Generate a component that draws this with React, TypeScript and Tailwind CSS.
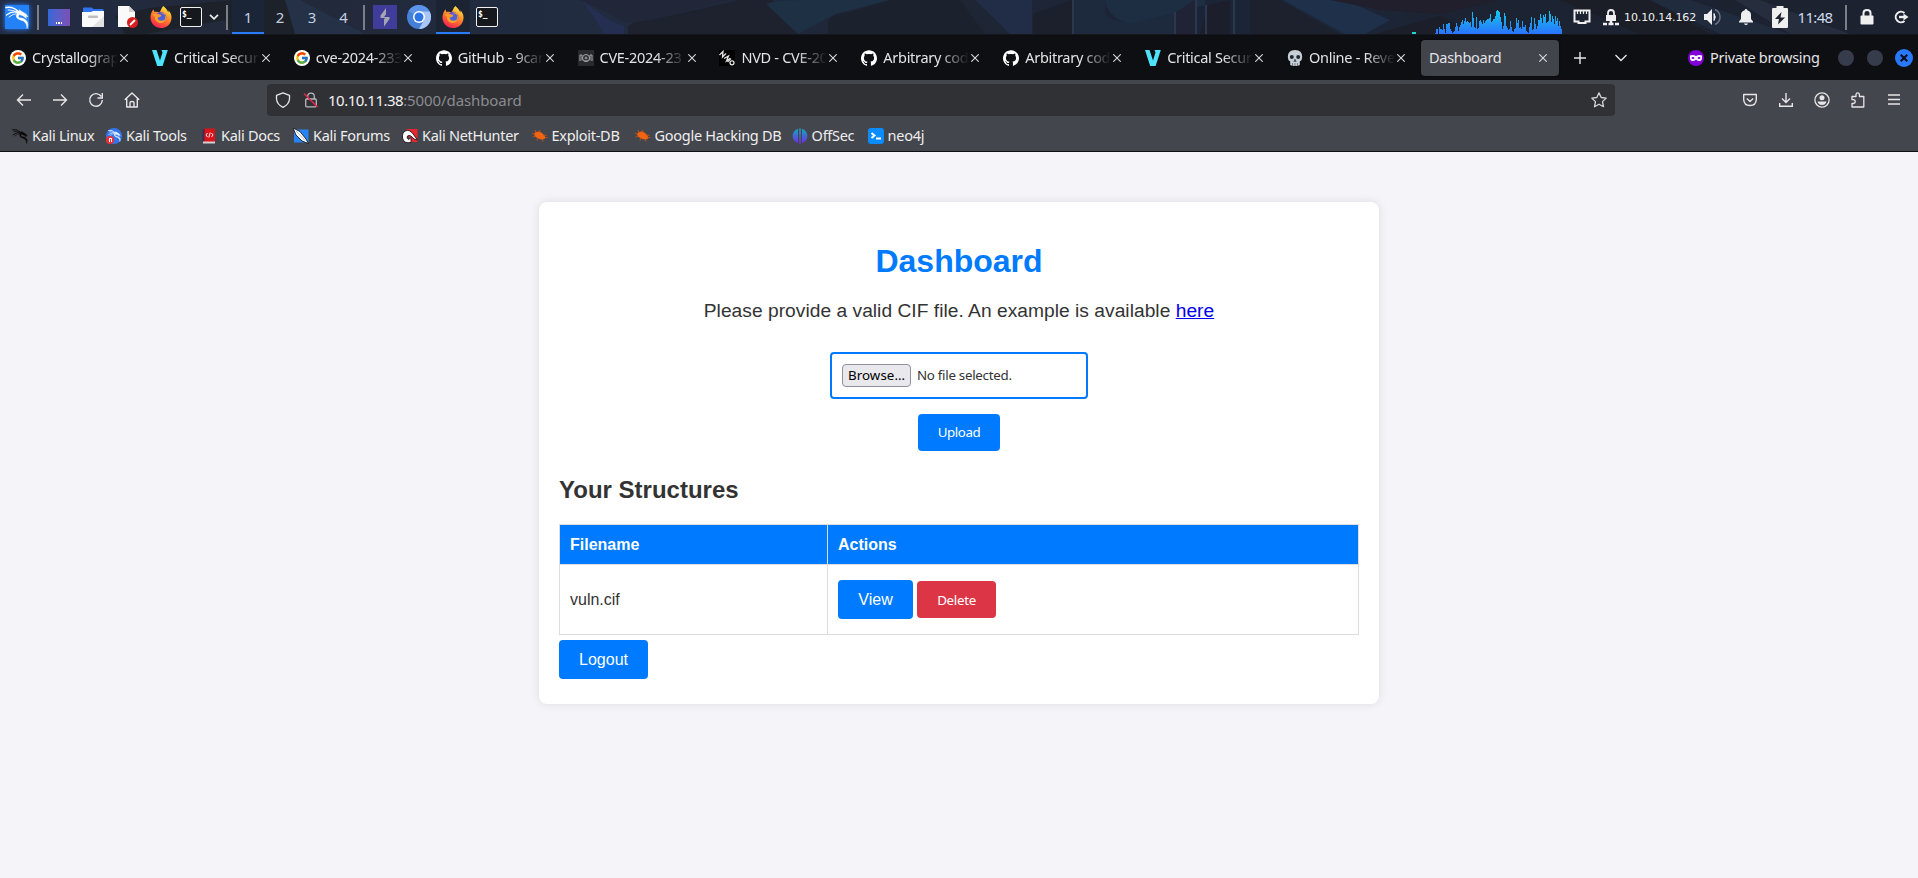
import React, { type ReactNode } from "react";
import { SiGithub } from "react-icons/si";
import { FcGoogle } from "react-icons/fc";

const BARS = [1,5,5,0,7,5,5,4,10,5,1,10,10,11,11,5,3,1,2,3,7,11,8,3,7,9,12,14,10,13,16,12,13,12,11,12,7,22,16,7,6,17,5,6,13,14,12,10,14,11,13,14,15,15,16,20,12,13,15,15,18,23,24,23,22,17,12,5,8,21,18,8,6,4,5,13,7,3,2,5,6,16,11,14,6,7,5,13,7,7,9,3,2,1,7,11,17,4,5,16,10,5,8,14,14,20,16,11,19,17,20,11,12,13,23,20,12,18,15,10,18,13,16,8,13,8,5];

function Cell({ w, className = "", children }: { w: string; className?: string; children?: ReactNode }) {
  return <div className={`flex h-[34px] shrink-0 items-center justify-center ${w} ${className}`}>{children}</div>;
}

function Sep() {
  return <div className="h-[25px] w-[2px] shrink-0 bg-[#7b7f88]" />;
}

function Dragon({ size, color }: { size: number; color: string }) {
  return (
    <svg width={size} height={size} viewBox="0 0 24 24" fill="none" stroke={color} strokeLinecap="round" aria-hidden="true">
      <path d="M1 2.500Q8 1 13 6.500" strokeWidth="1.500" />
      <path d="M3 5Q8 4.500 12 7.500" strokeWidth="1.100" />
      <path d="M1.500 10Q7 5.500 14 7.500" strokeWidth="1.300" />
      <path d="M4 12Q8 8.500 12.500 8.500" strokeWidth="0.900" />
      <path d="M12 6L14.500 6.200L14.200 4.800L17.500 7Q21 8 23 11.800L20.500 11.200L21.500 13.500Q18.500 10.500 14.500 9.500Q12.500 11 14 12.800Q20.500 13 22.500 17.500Q23.300 20 22 23.500Q22.300 18.500 18.500 16Q14 14.800 12 13Q10.200 10.500 12.800 8Z" fill={color} strokeWidth="0.500" />
    </svg>
  );
}

function Wallpaper() {
  return (
    <svg className="absolute inset-0 h-[34px] w-full" viewBox="0 0 1918 34" preserveAspectRatio="none" aria-hidden="true">
      <defs>
        <linearGradient id="wall" x1="0" x2="1">
          <stop offset="0" stopColor="#222d45" />
          <stop offset="0.12" stopColor="#222838" />
          <stop offset="0.3" stopColor="#212c41" />
          <stop offset="0.5" stopColor="#1e2535" />
          <stop offset="0.62" stopColor="#1b2437" />
          <stop offset="0.7" stopColor="#1c2739" />
          <stop offset="0.75" stopColor="#1c2332" />
          <stop offset="1" stopColor="#1c2230" />
        </linearGradient>
      </defs>
      <rect width="1918" height="34" fill="url(#wall)" />
      <path d="M115 16L150 8L235 0H285L300 34H125Z" fill="#1d2129" />
      <path d="M145 34L225 20L232 34Z" fill="#232a3c" />
      <path d="M285 0H300L365 34H295Z" fill="#243147" />
      <path d="M580 0H730L640 22Q625 25 612 15Z" fill="#212639" />
      <path d="M628 34V26Q632 22 650 20L740 0H772L798 34Z" fill="#1d222e" />
      <path d="M582 0Q608 22 624 26V34H605Z" fill="#26305a" opacity="0.7" />
      <path d="M766 4Q775 0 800 0H890L835 14L798 34Z" fill="#1d3044" />
      <path d="M828 34V22Q830 14 850 12L890 0H960L985 34Z" fill="#1c212e" />
      <path d="M975 0H1032V34H1010Z" fill="#212c47" />
      <path d="M1033 14L1072 0V34H1033Z" fill="#1c202c" />
      <path d="M1074 0H1105V14Q1115 24 1135 22L1175 12V34H1074Z" fill="#1d293c" />
      <path d="M1105 0H1205V5L1130 24Q1108 18 1105 0Z" fill="#1d2d42" />
      <path d="M1176 12V34H1195V0" fill="#202336" />
      <path d="M1208 5L1230 0V34H1200Z" fill="#1c1f2b" />
      <path d="M1250 34V0H1280L1340 34Z" fill="#1d212d" />
      <path d="M1283 0H1345L1390 20L1365 34H1345Z" fill="#1e304a" />
      <path d="M1330 0H1500L1440 14L1380 10Z" fill="#201f2b" />
      <path d="M1375 34L1440 16L1475 34Z" fill="#1c1e29" />
      <path d="M1560 0L1640 34H1710L1650 0Z" fill="#1b1e27" />
      <path d="M1650 0H1690L1790 34H1720Z" fill="#26344c" opacity="0.5" />
      <path d="M1735 0H1760L1850 34H1790Z" fill="#30374a" opacity="0.5" />
      <path d="M1073 0V34M1175 12V34M1196 0V34M1206 5V34M1234 0V34" stroke="#2a374c" strokeWidth="2" />
    </svg>
  );
}

function Firefox({ id }: { id: string }) {
  return (
    <svg width="22" height="22" viewBox="0 0 24 24" aria-hidden="true">
      <defs>
        <linearGradient id={id} x1="0.8" y1="0" x2="0.3" y2="1">
          <stop offset="0" stopColor="#fff44f" />
          <stop offset="0.35" stopColor="#ffa32c" />
          <stop offset="0.7" stopColor="#ff5a35" />
          <stop offset="1" stopColor="#ee1f58" />
        </linearGradient>
      </defs>
      <path d="M14.500 0C17 2 19 4.500 20 7C20.300 6.200 20.300 5.400 20 4.500C22.500 7 23.700 10 23.500 13C23.200 19.200 18.300 24 12 24C5.600 24 .5 19 .5 12.600C.5 9.200 1.800 5.600 4 3.500C4 4.700 4.300 5.600 5 6.500C7 6 8.500 6.200 10 7C12 5.500 12 2.500 14.500 0Z" fill={`url(#${id})`} />
      <circle cx="12" cy="12.200" r="5.800" fill="#7043d5" />
      <path d="M11 7.500Q15 6 17.500 9Q16.500 8.800 16 9.200Q18.500 12 17 15Q14.500 20 9 18Q5 16 5.300 11.500L2.500 9.500Q6 7.800 9 9.500L12 10.500Q11.500 12.500 8.800 12.800Q10 15.500 13 14.800Q16 13.500 14.500 10.500Q13.500 8.500 11 7.500Z" fill="#ffa329" />
      <circle cx="12.500" cy="12" r="4.200" fill="#4d62d9" />
      <path d="M5 9Q8 8 12.500 10Q12 12 9 12.500L6 12Z" fill="#ff9a2a" />
    </svg>
  );
}

function Terminal() {
  return (
    <div className="flex h-[20px] w-[22px] items-start rounded-[2px] border border-[#f2f2f2] bg-[#15181c] pl-[1px] pt-[2px] font-['DejaVu_Sans_Mono',monospace] text-[8px] font-bold leading-[9px] text-white">
      $_
    </div>
  );
}

function Chromium() {
  return (
    <svg width="24" height="24" viewBox="0 0 24 24" aria-hidden="true">
      <circle cx="12" cy="12" r="12" fill="#4480d8" />
      <path d="M12 12L1.600 6A12 12 0 0 1 22.400 6Z" fill="#5b94e8" />
      <path d="M12 6.500H22.700A12 12 0 0 1 12 24L17 15Z" fill="#a9c6f7" />
      <circle cx="12" cy="12" r="6" fill="#fff" />
      <circle cx="12" cy="12" r="4.500" fill="#2d76e8" />
    </svg>
  );
}

function LauncherBar() {
  return (
    <div className="flex h-[34px] items-center">
      <Cell w="w-[34px]">
        <div className="flex size-6 items-center justify-center bg-[#2382f7] shadow-[0_0_5px_#2a7fff]">
          <Dragon size={24} color="#fff" />
        </div>
      </Cell>
      <Cell w="w-[8px]"><Sep /></Cell>
      <Cell w="w-[34px]">
        <div className="flex h-[17px] w-[22px] items-end justify-center gap-px bg-linear-to-r from-[#2f68d8] to-[#7b4fb5] pb-[2px]">
          <i className="size-[1.5px] bg-white" /><i className="size-[1.5px] bg-white" /><i className="size-[1.5px] bg-white" />
        </div>
      </Cell>
      <Cell w="w-[34px]">
        <svg width="22" height="20" viewBox="0 0 22 20" aria-hidden="true">
          <path d="M1 8V1.500Q1 .5 2 .5H9.500L11.500 2H20.500Q21.500 2 21.500 3V8Z" fill="#2f74ee" />
          <path d="M0 5H9L11 4H22V19Q22 20 21 20H1Q0 20 0 19Z" fill="#fafafa" />
          <path d="M22 9V19Q22 20 21 20H10Z" fill="#e2e2e2" />
          <rect x="6" y="8.500" width="10" height="2.600" rx="1" fill="#bdbdbd" />
        </svg>
      </Cell>
      <Cell w="w-[36px]">
        <svg width="22" height="22" viewBox="0 0 22 22" aria-hidden="true">
          <path d="M1 0H12L18 6V21H1Z" fill="#fafafa" />
          <path d="M12 0L18 6H12Z" fill="#cfcfcf" />
          <circle cx="15.500" cy="16.500" r="5.500" fill="#d81e1e" />
          <path d="M13 19L18 14" stroke="#fff" strokeWidth="1.800" />
        </svg>
      </Cell>
      <Cell w="w-[30px]"><Firefox id="fx-launcher" /></Cell>
      <Cell w="w-[30px]"><Terminal /></Cell>
      <Cell w="w-[16px]">
        <svg width="10" height="6" viewBox="0 0 10 6" fill="none" stroke="#e8e8e8" strokeWidth="1.800" aria-hidden="true"><path d="M1 .8L5 4.800L9 .8" /></svg>
      </Cell>
      <Cell w="w-[10px]"><Sep /></Cell>
      <div className="flex text-[15px] text-[#c3d0e4]">
        <Cell w="w-[32px]" className="border-b-2 border-[#2a7bf6] bg-[#1b2538] pt-[2px]">1</Cell>
        <Cell w="w-[32px]">2</Cell>
        <Cell w="w-[32px]">3</Cell>
        <Cell w="w-[31px]">4</Cell>
      </div>
      <Cell w="w-[10px]"><Sep /></Cell>
      <Cell w="w-[32px]">
        <svg width="24" height="24" viewBox="0 0 24 24" aria-hidden="true">
          <rect width="24" height="24" fill="#403d9a" />
          <path d="M13 3V9.500L11 12H16.500V14L11 21.500V14.500L12 13H7.500V10.500Z" fill="#a3a5b2" />
        </svg>
      </Cell>
      <Cell w="w-[35px]"><Chromium /></Cell>
      <Cell w="w-[34px]" className="border-b-2 border-[#2a7bf6] bg-[#1c2333] pt-[2px]"><Firefox id="fx-task" /></Cell>
      <Cell w="w-[34px]"><Terminal /></Cell>
    </div>
  );
}

function SystemTray() {
  return (
    <div className="flex h-[34px] items-center text-[#efefef]">
      <svg width="152" height="34" viewBox="0 0 152 34" shapeRendering="crispEdges" aria-hidden="true">
        <defs>
          <linearGradient id="net" gradientUnits="userSpaceOnUse" x1="0" x2="0" y1="8" y2="34">
            <stop offset="0" stopColor="#10d2e8" />
            <stop offset="1" stopColor="#2a72ff" />
          </linearGradient>
        </defs>
        <path d="M1 32h4v2h-4z" fill="#22d5c8" />
        {BARS.map((h, i) => (
          <rect key={i} x={24 + i} y={34 - h} width="1" height={h} fill="url(#net)" />
        ))}
      </svg>
      <Cell w="w-[37px]">
        <svg width="18" height="16" viewBox="0 0 18 16" aria-hidden="true">
          <path d="M1.500 1.500H16.500V12.500H12.500V14H5.500V12.500H1.500Z" fill="none" stroke="currentColor" strokeWidth="2" />
          <path d="M4.500 2V5M7.500 2V5M10.500 2V5M13.500 2V5" stroke="currentColor" strokeWidth="1.200" />
        </svg>
      </Cell>
      <Cell w="w-[22px]">
        <svg width="16" height="17" viewBox="0 0 16 17" aria-hidden="true">
          <path d="M3 6H13V12H3Z" fill="currentColor" />
          <path d="M5 7V4Q5 1 8 1Q11 1 11 4V7" fill="none" stroke="currentColor" strokeWidth="1.800" />
          <path d="M0 15H4M12 15H16M5.500 15H10.500M8 12V14" stroke="currentColor" strokeWidth="2.600" />
        </svg>
      </Cell>
      <div className="w-[81px] whitespace-nowrap pl-[2px] font-['DejaVu_Sans',sans-serif] text-[11px] leading-none tracking-[-0.120px]">10.10.14.162</div>
      <Cell w="w-[19px]">
        <svg width="17" height="18" viewBox="0 0 17 18" aria-hidden="true">
          <path d="M0 6H3L8 1V17L3 12H0Z" fill="currentColor" />
          <path d="M10 5.500Q12.500 9 10 12.500Z" fill="currentColor" stroke="currentColor" />
          <path d="M11 1.500Q16 4 16 9Q16 14 11 16.500" fill="none" stroke="#6d7280" strokeWidth="1.500" />
        </svg>
      </Cell>
      <Cell w="w-[48px]">
        <svg width="14" height="16" viewBox="0 0 14 16" aria-hidden="true">
          <path d="M7 0Q8.200 0 8.300 1.300Q12 2.200 12 6V10L14 12.500V13.500H0V12.500L2 10V6Q2 2.200 5.700 1.300Q5.800 0 7 0ZM5 14.500H9Q8.500 16 7 16Q5.500 16 5 14.500Z" fill="currentColor" />
        </svg>
      </Cell>
      <Cell w="w-[20px]">
        <svg width="16" height="22" viewBox="0 0 16 22" aria-hidden="true">
          <path d="M4.500 0H11.500V2H15Q16 2 16 3V21Q16 22 15 22H1Q0 22 0 21V3Q0 2 1 2H4.500Z" fill="currentColor" />
          <path d="M9.500 6L3 13H7L6 18.500L13 11.500H8.500Z" fill="#1c2230" />
        </svg>
      </Cell>
      <Cell w="w-[51px]" className="pr-px text-[15px] tracking-[-0.700px] text-[#cdd9ea]">11:48</Cell>
      <Cell w="w-[10px]"><Sep /></Cell>
      <Cell w="w-[32px]">
        <svg width="14" height="16" viewBox="0 0 14 16" aria-hidden="true">
          <rect x="0.500" y="6.500" width="13" height="9" rx="1" fill="currentColor" />
          <path d="M3.500 7V4Q3.500 1 7 1Q10.500 1 10.500 4V7" fill="none" stroke="currentColor" strokeWidth="2" />
        </svg>
      </Cell>
      <Cell w="w-[35px]" className="pl-[2px]">
        <svg width="15" height="14" viewBox="0 0 15 14" fill="none" stroke="currentColor" strokeWidth="2" aria-hidden="true">
          <path d="M10.500 3A5.300 5.300 0 1 0 10.500 11" />
          <path d="M5 7H10" strokeWidth="2.400" /><path d="M9.500 3.500L14.500 7L9.500 10.500Z" fill="currentColor" stroke="none" />
        </svg>
      </Cell>
    </div>
  );
}

const VMark = () => (
  <svg width="16" height="16" viewBox="0 0 16 16" aria-hidden="true"><path d="M0 0H4.500L8 10.500L10.500 2.500L9.500 0H15.800L10.600 16H5.200Z" fill="#4ce3fb" /></svg>
);
const GoogleMark = () => <span className="flex size-4 items-center justify-center rounded-full bg-white"><FcGoogle size={14} /></span>;
const GithubMark = () => <SiGithub size={16} color="#fff" />;
const CveMark = () => (
  <svg width="16" height="16" viewBox="0 0 16 16" fill="none" stroke="#a4a6a8" aria-hidden="true">
    <rect width="16" height="16" fill="#292a2d" stroke="none" />
    <circle cx="8" cy="8" r="3.500" /><circle cx="8" cy="8" r="1" /><path d="M2 5V11M4 5V10.500M12 5V10.500M14 5V11M2 5H4M12 5H14M6 11H10" />
  </svg>
);
const NvdMark = () => (
  <svg width="16" height="16" viewBox="0 0 16 16" fill="none" stroke="#e6e6e6" strokeWidth="1.300" aria-hidden="true">
    <rect width="16" height="16" fill="#000" stroke="none" />
    <path d="M.5 5L4 1.500L3.500 7L7 3.500M5 8.500L9.500 6L7.500 11L11 8.500" /><circle cx="13" cy="12.800" r="2" /><path d="M8.500 12L12 8.500" />
  </svg>
);
const SkullMark = () => (
  <svg width="16" height="16" viewBox="0 0 16 16" aria-hidden="true">
    <path d="M8 0Q15.200 0 15.200 7Q15.200 10.500 12.800 11.500V15Q11.500 16 8 16Q4.500 16 3.200 15V11.500Q.8 10.500 .8 7Q.8 0 8 0Z" fill="#c6ced6" />
    <circle cx="4.800" cy="7" r="2" fill="#202832" /><circle cx="11.200" cy="7" r="2" fill="#202832" />
    <path d="M8 9L9.200 11.500H6.800ZM5.500 13V16M8 13V16M10.500 13V16" fill="#202832" stroke="#59636e" strokeWidth="0.700" />
  </svg>
);

const TABS: { title: string; icon: ReactNode }[] = [
  { title: "Crystallograp", icon: <GoogleMark /> },
  { title: "Critical Secur", icon: <VMark /> },
  { title: "cve-2024-233", icon: <GoogleMark /> },
  { title: "GitHub - 9car", icon: <GithubMark /> },
  { title: "CVE-2024-23", icon: <CveMark /> },
  { title: "NVD - CVE-20", icon: <NvdMark /> },
  { title: "Arbitrary cod", icon: <GithubMark /> },
  { title: "Arbitrary cod", icon: <GithubMark /> },
  { title: "Critical Secur", icon: <VMark /> },
  { title: "Online - Reve", icon: <SkullMark /> },
];

function Close() {
  return <svg width="8" height="8" viewBox="0 0 8 8" stroke="#d9d9dc" strokeWidth="1.100" className="shrink-0" aria-hidden="true"><path d="M.3 .3L7.700 7.700M7.700 .3L.3 7.700" /></svg>;
}

function TabStrip() {
  return (
    <div className="flex h-[45px] items-center bg-[#0e0f13] text-[14.500px] leading-[21px] tracking-[-0.290px] text-[#e4e4e6]">
      <div className="flex w-[1419px] shrink-0 gap-[24px] pl-[10px]">
        {TABS.map((t, i) => (
          <div key={i} className="flex w-[117.900px] shrink-0 items-center">
            <span className="flex size-4 shrink-0">{t.icon}</span>
            <span className="ml-[6px] mr-[2px] w-[86px] shrink-0 whitespace-nowrap pb-px mask-r-from-65% mask-r-to-100%">{t.title}</span>
            <Close />
          </div>
        ))}
      </div>
      <div className="ml-[2px] flex h-9 w-[138px] shrink-0 items-center justify-between rounded-[4px] bg-[#42444c] pl-2 pr-[12px] shadow-[0_0_2px_#000]">
        <span className="pb-px">Dashboard</span>
        <Close />
      </div>
      <Cell w="w-[42px]">
        <svg width="12" height="12" viewBox="0 0 12 12" stroke="#e8e8ea" strokeWidth="1.400" aria-hidden="true"><path d="M6 0V12M0 6H12" /></svg>
      </Cell>
      <Cell w="w-[40px]">
        <svg width="12" height="8" viewBox="0 0 12 8" fill="none" stroke="#e8e8ea" strokeWidth="1.300" aria-hidden="true"><path d="M.5 1L6 6.500L11.500 1" /></svg>
      </Cell>
      <div className="ml-auto flex items-center pr-[5px]">
        <svg width="16" height="16" viewBox="0 0 16 16" aria-hidden="true">
          <circle cx="8" cy="8" r="8" fill="#8000d7" />
          <path d="M2 5.500Q5 4.500 8 6Q11 4.500 14 5.500Q14.500 11 11.500 11Q9.500 11 8 9.500Q6.500 11 4.500 11Q1.500 11 2 5.500Z" fill="#fff" />
          <ellipse cx="5" cy="8" rx="1.500" ry="1" fill="#8000d7" /><ellipse cx="11" cy="8" rx="1.500" ry="1" fill="#8000d7" />
        </svg>
        <span className="ml-[6px] w-[128px] whitespace-nowrap pb-px">Private browsing</span>
        <span className="size-4 rounded-full bg-[#363c4b]" />
        <span className="ml-[13px] mr-[12px] size-4 rounded-full bg-[#363c4b]" />
        <span className="flex size-[18px] items-center justify-center rounded-full bg-[#2777ff]">
          <svg width="8" height="8" viewBox="0 0 8 8" stroke="#0e0f13" strokeWidth="2" aria-hidden="true"><path d="M.7 .7L7.300 7.300M7.300 .7L.7 7.300" /></svg>
        </span>
      </div>
    </div>
  );
}

function NavBar() {
  return (
    <div className="flex h-10 items-center text-[#e6e6e8]">
      <div className="flex w-[267px] shrink-0 items-center pl-[16px]">
        <Cell w="w-[16px]"><svg width="16" height="16" viewBox="0 0 16 16" fill="none" stroke="currentColor" strokeWidth="1.400" aria-hidden="true"><path d="M15 8H1.500M7 2.500L1.500 8L7 13.500" /></svg></Cell>
        <Cell w="ml-5 w-[16px]"><svg width="16" height="16" viewBox="0 0 16 16" fill="none" stroke="currentColor" strokeWidth="1.400" aria-hidden="true"><path d="M1 8H14.500M9 2.500L14.500 8L9 13.500" /></svg></Cell>
        <Cell w="ml-5 w-[16px]"><svg width="16" height="16" viewBox="0 0 16 16" fill="none" stroke="currentColor" strokeWidth="1.400" aria-hidden="true"><path d="M13.300 4.500A6.300 6.300 0 1 0 14.300 8M14.300 1V6H9.500" /></svg></Cell>
        <Cell w="ml-5 w-[16px]"><svg width="16" height="16" viewBox="0 0 16 16" fill="none" stroke="currentColor" strokeWidth="1.400" strokeLinejoin="round" aria-hidden="true"><path d="M.8 7.800L8 1L15.200 7.800M2.700 6.500V15H13.300V6.500M6 15V10.500Q6 9.500 8 9.500Q10 9.500 10 10.500V15" /></svg></Cell>
      </div>
      <div className="flex h-8 w-[1348px] shrink-0 items-center rounded-[4px] bg-[#303135] pl-2 pr-2">
        <svg width="16" height="16" viewBox="0 0 16 16" fill="none" stroke="currentColor" strokeWidth="1.300" strokeLinejoin="round" aria-hidden="true"><path d="M8 .8L14.500 3.300V7Q14 12.500 8 15.300Q2 12.500 1.500 7V3.300Z" /></svg>
        <svg className="ml-3" width="16" height="16" viewBox="0 0 16 16" fill="none" stroke="#b9b9bd" strokeWidth="1.300" aria-hidden="true">
          <rect x="2.700" y="7" width="10.600" height="7.800" rx="1" /><path d="M4.700 7V4.500Q4.700 1.200 8 1.200Q11.300 1.200 11.300 4.500V7" /><path d="M1 1.500L14.500 15" stroke="#e22850" strokeWidth="1.500" />
        </svg>
        <span className="ml-[9px] text-[15px] tracking-[-0.100px] text-[#8b8b90]"><span className="tracking-[-0.500px] text-[#f2f2f4]">10.10.11.38</span>:5000/dashboard</span>
        <svg className="ml-auto" width="16" height="16" viewBox="0 0 16 16" fill="none" stroke="#d6d6d9" strokeWidth="1.300" strokeLinejoin="round" aria-hidden="true"><path d="M8 .9L10.200 5.500L15.200 6.100L11.500 9.600L12.500 14.700L8 12.200L3.500 14.700L4.500 9.600L.8 6.100L5.800 5.500Z" /></svg>
      </div>
      <div className="ml-auto flex items-center gap-[20px] pr-[16px]">
        <svg width="16" height="16" viewBox="0 0 16 16" fill="none" stroke="currentColor" strokeWidth="1.400" strokeLinejoin="round" aria-hidden="true"><path d="M1.700 2.500H14.300V7.500Q14 13.500 8 13.500Q2 13.500 1.700 7.500ZM4.800 6.500L8 9.500L11.200 6.500" /></svg>
        <svg width="16" height="16" viewBox="0 0 16 16" fill="none" stroke="currentColor" strokeWidth="1.400" aria-hidden="true"><path d="M8 1V10M4 6.500L8 10.500L12 6.500M1.700 11V14.300H14.300V11" /></svg>
        <svg width="16" height="16" viewBox="0 0 16 16" aria-hidden="true"><circle cx="8" cy="8" r="7.100" fill="none" stroke="currentColor" strokeWidth="1.300" /><circle cx="8" cy="5.800" r="2.500" fill="currentColor" /><path d="M3.500 9.500H12.500Q11.500 13 8 13Q4.500 13 3.500 9.500Z" fill="currentColor" /></svg>
        <svg width="16" height="16" viewBox="0 0 16 16" fill="none" stroke="currentColor" strokeWidth="1.300" strokeLinejoin="round" aria-hidden="true"><path d="M2 15V11.500H3.500Q5.300 11 5.300 9.500Q5.300 8 3.500 7.700H2V4.500H6V2.500Q6.200 .8 7.700 .8Q9.200 .8 9.400 2.500V4.500H13.800V15Z" /></svg>
        <svg width="16" height="16" viewBox="0 0 16 16" stroke="currentColor" strokeWidth="1.300" aria-hidden="true"><path d="M2 3H14M2 7.500H14M2 12H14" /></svg>
      </div>
    </div>
  );
}

const BugMark = () => (
  <svg width="16" height="16" viewBox="0 0 16 16" aria-hidden="true"><path d="M2 6Q3 3.500 6 3.500Q9 3.500 10.500 5.500Q13 7 13 10.500Q10 12.500 6.500 10.500Q3 9.500 2 6Z" fill="#f26411" /><path d="M4 5L3 2M8 5L7.500 2M11 7L14.500 7.500M13 9.500H15.500M10 11L11 13.500M6 10L5 12.500M3 8L.5 9M2.500 6L0 5.500" stroke="#c9520f" strokeWidth="0.900" /></svg>
);

const BOOKMARKS: { label: string; width: string; icon: ReactNode }[] = [
  { label: "Kali Linux", width: "w-[94px]", icon: <Dragon size={16} color="#0a0a0a" /> },
  {
    label: "Kali Tools", width: "w-[95px]",
    icon: <span className="relative flex size-4 items-center justify-center rounded-full bg-[#2f76ee]"><Dragon size={13} color="#e4eeff" /><i className="absolute bottom-0 left-0 flex size-[8px] items-center justify-center rounded-full bg-[#ee2f36]"><i className="h-[4px] w-[3px] border-x border-t border-white" /></i></span>,
  },
  {
    label: "Kali Docs", width: "w-[92px]",
    icon: <svg width="16" height="16" viewBox="0 0 16 16" aria-hidden="true"><path d="M3 .5H14V14H2V1.500Z" fill="#db1218" /><path d="M1.500 1.500L3.500 .5V13.500H1.500Z" fill="#3b2a58" /><path d="M2 13.500H14V15.500H2Z" fill="#d7d0d0" /><path d="M6.500 5L5 7L6.500 9M10.500 5L12 7L10.500 9M9.200 4.500L7.800 9.500" fill="none" stroke="#fff" strokeWidth="0.900" /></svg>,
  },
  {
    label: "Kali Forums", width: "w-[109px]",
    icon: <svg width="16" height="16" viewBox="0 0 16 16" aria-hidden="true"><path d="M1 1.500H15.500V14.500H1Z" fill="#2585f5" /><path d="M0 0L7 3.500L13 11L15.500 15.500L9 13L3 7Z" fill="#fff" stroke="#101722" strokeWidth="0.900" /><path d="M3 3L12 12.500" stroke="#94a5b8" strokeWidth="0.700" /></svg>,
  },
  {
    label: "Kali NetHunter", width: "w-[129.600px]",
    icon: <svg width="16" height="16" viewBox="0 0 16 16" aria-hidden="true"><path d="M4 1H15.500V14H9Z" fill="#e52730" /><path d="M1 5Q5 0 10 4.500L15.500 12L12 11Q8 6 5.500 8Q4.500 10 6.500 11.500L9 9.500V14.500Q2 16 .5 10Q.3 7 1 5Z" fill="#fff" stroke="#221018" strokeWidth="0.900" /></svg>,
  },
  { label: "Exploit-DB", width: "w-[103px]", icon: <BugMark /> },
  { label: "Google Hacking DB", width: "w-[157px]", icon: <BugMark /> },
  {
    label: "OffSec", width: "w-[76px]",
    icon: <svg width="16" height="16" viewBox="0 0 16 16" aria-hidden="true"><defs><linearGradient id="offsec" x2="0" y2="1"><stop stopColor="#17a7c4" /><stop offset="1" stopColor="#6b2be0" /></linearGradient></defs><path d="M6 .8V15.200Q.6 13 .6 8Q.6 3 6 .8ZM7.200 .4H8.800V15.700H7.200ZM10 .8Q15.400 3 15.400 8Q15.400 13 10 15.200Z" fill="url(#offsec)" /></svg>,
  },
  {
    label: "neo4j", width: "w-[80px]",
    icon: <svg width="16" height="16" viewBox="0 0 16 16" aria-hidden="true"><rect width="16" height="16" rx="3" fill="#0a8cff" /><path d="M3.500 5L6.500 7.500L3.500 10M8 10.500H13" fill="none" stroke="#fff" strokeWidth="2" /></svg>,
  },
];

function Bookmarks() {
  return (
    <div className="flex h-[31px] items-center pl-[12px] text-[14.500px] leading-[21px] tracking-[-0.290px] text-[#eeeeef]">
      {BOOKMARKS.map((b) => (
        <div key={b.label} className={`flex shrink-0 items-center whitespace-nowrap ${b.width}`}>
          <span className="mr-1 flex size-4 shrink-0">{b.icon}</span>
          <span className="pb-px">{b.label}</span>
        </div>
      ))}
    </div>
  );
}

function DashboardCard() {
  return (
    <section className="h-[502px] w-[840px] rounded-[8px] bg-white px-5 pt-[41px] font-['Liberation_Sans',Arial,sans-serif] text-base text-[#333] shadow-[0_0_10px_rgba(0,0,0,0.1)]">
      <h1 className="text-center text-[32px] font-bold leading-[37px] text-[#007bff]">Dashboard</h1>
      <p className="mt-[20px] text-center text-[19.200px] leading-[22px] tracking-[0.028px]">
        Please provide a valid CIF file. An example is available{" "}
        <a href="#" className="text-[#0000ee] underline">here</a>
      </p>
      <form className="mt-[30px] flex flex-col items-center font-['Noto_Sans',sans-serif] text-[13.333px]">
        <div className="flex h-[47px] w-[258px] items-center rounded-[4px] border-2 border-[#007bff] px-[10px]">
          <button type="button" className="h-[23px] w-[69px] rounded-[4px] border border-[#8f8f9d] bg-[#e9e9ed] text-center leading-[21px] tracking-[0.050px] text-black">Browse…</button>
          <span className="ml-[6px] pt-px tracking-[-0.280px]">No file selected.</span>
        </div>
        <button type="button" className="mt-[15px] h-[37px] w-[82px] rounded-[4px] bg-[#007bff] pt-px tracking-[-0.400px] text-white">Upload</button>
      </form>
      <h2 className="mt-[25px] text-2xl font-bold leading-[28px]">Your Structures</h2>
      <table className="mt-[20px] w-[800px] table-fixed border-collapse text-left leading-[18px]">
        <colgroup><col className="w-[268px]" /><col /></colgroup>
        <thead>
          <tr className="h-[40px] bg-[#007bff] text-white">
            <th className="border border-[#ddd] px-[10px]">Filename</th>
            <th className="border border-[#ddd] px-[10px]">Actions</th>
          </tr>
        </thead>
        <tbody>
          <tr className="h-[70px]">
            <td className="border border-[#ddd] px-[10px]">vuln.cif</td>
            <td className="border border-[#ddd] px-[10px]">
              <div className="flex items-center gap-[4px]">
                <a href="#" className="flex h-[39px] w-[75px] items-center justify-center rounded-[4px] bg-[#007bff] text-white">View</a>
                <button type="button" className="h-[37px] w-[79px] rounded-[4px] bg-[#dc3545] pt-px font-['Noto_Sans',sans-serif] text-[13.333px] tracking-[-0.300px] text-white">Delete</button>
              </div>
            </td>
          </tr>
        </tbody>
      </table>
      <a href="#" className="mt-[5px] flex h-[39px] w-[89px] items-center justify-center rounded-[4px] bg-[#007bff] text-white">Logout</a>
    </section>
  );
}

export default function App() {
  return (
    <div className="flex h-[878px] w-[1918px] flex-col overflow-hidden bg-[#f4f4f9] font-['Noto_Sans',sans-serif]">
      <header className="relative h-[35px] shrink-0 border-b border-[#15171c] bg-[#1f2637]">
        <Wallpaper />
        <div className="relative flex justify-between">
          <LauncherBar />
          <SystemTray />
        </div>
      </header>
      <TabStrip />
      <div className="h-[72px] shrink-0 border-b border-[#0e0f13] bg-[#44464d]">
        <NavBar />
        <Bookmarks />
      </div>
      <main className="flex grow justify-center pt-[50px]">
        <DashboardCard />
      </main>
    </div>
  );
}
